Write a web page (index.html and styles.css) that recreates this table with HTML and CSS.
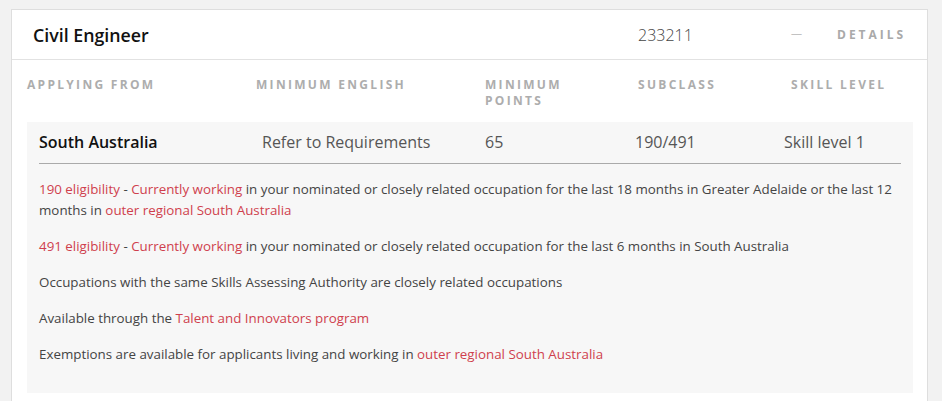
FILE: index.html
```html
<!DOCTYPE html>
<html>
<head>
<meta charset="utf-8">
<link rel="stylesheet" href="styles.css">
</head>
<body>
<div class="card">
  <div class="card-head">
    <div class="title">Civil Engineer</div>
    <div class="code">233211</div>
    <div class="toggle"><span class="dash">—</span><span class="details">DETAILS</span></div>
  </div>
  <div class="card-body">
    <div class="col-heads">
      <div>APPLYING FROM</div>
      <div>MINIMUM ENGLISH</div>
      <div>MINIMUM<br>POINTS</div>
      <div>SUBCLASS</div>
      <div>SKILL LEVEL</div>
    </div>
    <div class="box">
      <div class="row">
        <div class="state">South Australia</div>
        <div>Refer to Requirements</div>
        <div>65</div>
        <div>190/491</div>
        <div>Skill level 1</div>
      </div>
      <div class="notes">
        <p><span class="link">190 eligibility</span> - <span class="link">Currently working</span> in your nominated or closely related occupation for the last 18 months in Greater Adelaide or the last 12 months in <span class="link">outer regional South Australia</span></p>
        <p><span class="link">491 eligibility</span> - <span class="link">Currently working</span> in your nominated or closely related occupation for the last 6 months in South Australia</p>
        <p>Occupations with the same Skills Assessing Authority are closely related occupations</p>
        <p>Available through the <span class="link">Talent and Innovators program</span></p>
        <p>Exemptions are available for applicants living and working in <span class="link">outer regional South Australia</span></p>
      </div>
    </div>
  </div>
</div>
</body>
</html>
```

FILE: styles.css
```css
html, body {
  margin: 0;
  padding: 0;
  background: #f2f2f2;
  font-family: "Open Sans", "Lato", sans-serif;
  color: #444;
}

.card {
  margin: 9px 0 0 11px;
  width: 917px;
  background: #fff;
  border: 1px solid #dedede;
  border-bottom: none;
  height: 392px;
  box-sizing: border-box;
}

.card-head {
  display: grid;
  grid-template-columns: 626px 153px 1fr;
  align-items: center;
  height: 50px;
  border-bottom: 1px solid #e2e2e2;
  box-sizing: border-box;
}

.title {
  padding-left: 21px;
  font-size: 17.8px;
  font-weight: 600;
  color: #111;
}

.code {
  font-size: 16px;
  font-weight: 300;
  color: #444;
}

.toggle {
  display: flex;
  align-items: center;
  gap: 35px;
}

.dash {
  color: #c2c2c2;
  font-size: 11px;
  line-height: 14px;
  margin-top: -3px;
}

.details {
  font-size: 12px;
  font-weight: 700;
  letter-spacing: 3px;
  color: #a9a9a9;
}

.card-body {
  padding: 0 14px 0 15px;
}

.col-heads {
  display: grid;
  grid-template-columns: 229px 229px 153px 153px 1fr;
  padding-top: 17px;
  padding-bottom: 13px;
  font-size: 12px;
  font-weight: 700;
  letter-spacing: 2.3px;
  line-height: 16px;
  color: #adadad;
}

.box {
  background: #f7f7f7;
  padding: 10px 12px 28px 12px;
  height: 271px;
  box-sizing: border-box;
}

.row {
  display: grid;
  grid-template-columns: 223px 223px 150px 149px 1fr;
  line-height: 20px;
  font-size: 16px;
  color: #555;
  padding-bottom: 11px;
  border-bottom: 1px solid #aaa;
}

.row .state {
  font-weight: 600;
  color: #111;
}

.notes {
  padding-top: 15px;
  font-size: 13.35px;
  line-height: 21px;
  color: #444;
}

.notes p {
  margin: 0 0 15px 0;
}

.link {
  color: #cf3f4d;
}
```
